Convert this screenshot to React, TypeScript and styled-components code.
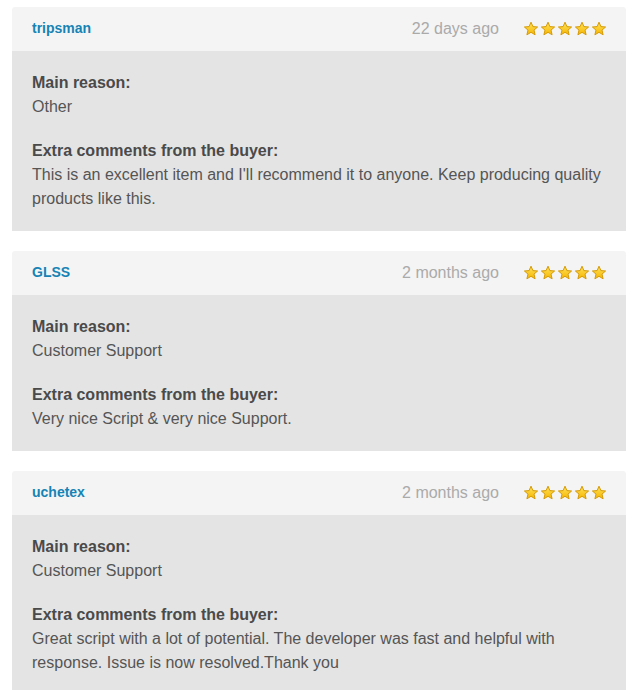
import * as React from 'react'
import styled, { createGlobalStyle } from 'styled-components'

const GlobalStyle = createGlobalStyle`
  html, body {
    margin: 0;
    padding: 0;
    background: #ffffff;
  }
  body {
    font-family: "Liberation Sans", Arial, Helvetica, sans-serif;
  }
`

const StyledPage = styled.div`
  width: 614px;
  padding: 7px 4px 0 12px;
  display: flex;
  flex-direction: column;
  gap: 20px;
`

const StyledCard = styled.div`
  display: flex;
  flex-direction: column;
`

const StyledHeader = styled.div`
  height: 44px;
  padding: 0 19px 0 20px;
  display: flex;
  flex-direction: row;
  align-items: center;
  background-color: #f4f4f4;
  border-radius: 3px 3px 0 0;
`

const StyledUser = styled.a`
  flex: 1;
  font-size: 14px;
  font-weight: 700;
  color: #1683b5;
  text-decoration: none;
  margin-bottom: 2px;
`

const StyledDate = styled.span`
  font-size: 16px;
  color: #aaaaaa;
  margin-right: 24px;
`

const StyledStars = styled.div`
  display: flex;
  flex-direction: row;
  gap: 1px;
`

const StyledBody = styled.div`
  padding: 20px 20px 20px;
  background-color: #e4e4e4;
  font-size: 16px;
  line-height: 24px;
  color: #555555;
`

const StyledSection = styled.div`
  & + & {
    margin-top: 20px;
  }
`

const StyledLabel = styled.div`
  font-weight: 700;
  color: #4a4a4a;
`

const Star = () => (
  <svg width="16" height="16" viewBox="0 0 16 16">
    <defs>
      <linearGradient id="starFill" x1="0" y1="0" x2="0" y2="1">
        <stop offset="0" stopColor="#ffe45c" />
        <stop offset="1" stopColor="#f6b500" />
      </linearGradient>
    </defs>
    <path
      d="M8 1.2 L9.9 5.6 L14.6 6 L11 9.1 L12.1 13.8 L8 11.3 L3.9 13.8 L5 9.1 L1.4 6 L6.1 5.6 Z"
      fill="url(#starFill)"
      stroke="#d69a05"
      strokeWidth="1"
      strokeLinejoin="round"
    />
  </svg>
)

type Review = {
  user: string
  date: string
  reason: string
  comment: string
}

const reviews: Review[] = [
  {
    user: 'tripsman',
    date: '22 days ago',
    reason: 'Other',
    comment:
      "This is an excellent item and I'll recommend it to anyone. Keep producing quality products like this.",
  },
  {
    user: 'GLSS',
    date: '2 months ago',
    reason: 'Customer Support',
    comment: 'Very nice Script & very nice Support.',
  },
  {
    user: 'uchetex',
    date: '2 months ago',
    reason: 'Customer Support',
    comment:
      'Great script with a lot of potential. The developer was fast and helpful with response. Issue is now resolved.Thank you',
  },
]

const ReviewCard = ({ review }: { review: Review }) => (
  <StyledCard>
    <StyledHeader>
      <StyledUser href="#">{review.user}</StyledUser>
      <StyledDate>{review.date}</StyledDate>
      <StyledStars>
        {[0, 1, 2, 3, 4].map((i) => (
          <Star key={i} />
        ))}
      </StyledStars>
    </StyledHeader>
    <StyledBody>
      <StyledSection>
        <StyledLabel>Main reason:</StyledLabel>
        <div>{review.reason}</div>
      </StyledSection>
      <StyledSection>
        <StyledLabel>Extra comments from the buyer:</StyledLabel>
        <div>{review.comment}</div>
      </StyledSection>
    </StyledBody>
  </StyledCard>
)

const App = () => {
  return (
    <>
      <GlobalStyle />
      <StyledPage>
        {reviews.map((r) => (
          <ReviewCard key={r.user} review={r} />
        ))}
      </StyledPage>
    </>
  )
}

export default App
